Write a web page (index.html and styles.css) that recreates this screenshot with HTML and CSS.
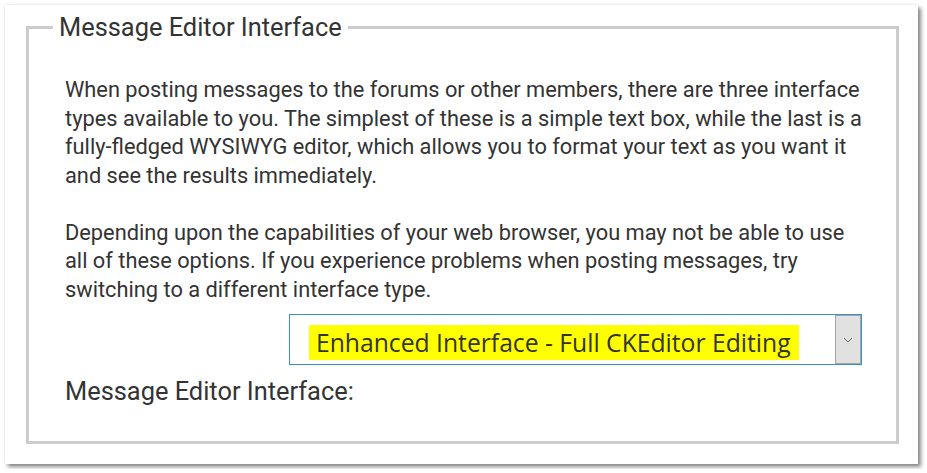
FILE: index.html
```html
<!DOCTYPE html>
<html>
<head>
<meta charset="utf-8">
<link rel="stylesheet" href="styles.css">
</head>
<body>
<div class="card">
  <fieldset class="group">
    <legend class="group-title">Message Editor Interface</legend>
    <div class="content">
      <p class="para">When posting messages to the forums or other members, there are three interface types available to you. The simplest of these is a simple text box, while the last is a fully-fledged WYSIWYG editor, which allows you to format your text as you want it and see the results immediately.</p>
      <p class="para">Depending upon the capabilities of your web browser, you may not be able to use all of these options. If you experience problems when posting messages, try switching to a different interface type.</p>
      <div class="select-row">
        <div class="select">
          <span class="select-value">Enhanced Interface - Full CKEditor Editing</span>
          <span class="select-btn">
            <svg width="10" height="6" viewBox="0 0 10 6"><polyline points="1,1 5,5 9,1" fill="none" stroke="#666" stroke-width="1"/></svg>
          </span>
        </div>
      </div>
      <div class="field-label">Message Editor Interface:</div>
    </div>
  </fieldset>
</div>
</body>
</html>
```
FILE: styles.css
```css
html, body {
  margin: 0;
  padding: 0;
  background: #fff;
}
body {
  padding: 5px;
  font-family: Roboto, "Liberation Sans", sans-serif;
  color: #333;
}
.card {
  width: 913px;
  height: 459px;
  box-sizing: border-box;
  background: #fff;
  box-shadow: 3px 3px 4px rgba(0,0,0,0.45), 0 0 3px rgba(0,0,0,0.12);
  padding: 8px 19px 20px 21px;
}
.group {
  margin: 0;
  border: 3px solid #ccc;
  padding: 0 24px;
  height: 431px;
  box-sizing: border-box;
}
.group-title {
  padding: 0 6px;
  font-size: 25.4px;
  line-height: 29px;
  color: #333;
}
.content {
  padding: 34px 0 0 12px;
}
.para {
  margin: 0;
  font-size: 21.8px;
  line-height: 28.5px;
}
.para + .para {
  margin-top: 28.5px;
}
.select-row {
  display: flex;
  justify-content: flex-end;
  margin: 10px 10px 0 0;
}
.select {
  width: 573px;
  height: 51px;
  box-sizing: border-box;
  border: 1px solid #3d8fc6;
  display: flex;
  align-items: stretch;
  background: #fff;
}
.select-value {
  align-self: flex-start;
  margin: 10px 0 0 19px;
  padding: 0 8px 0 7px;
  background: #ffff00;
  font-family: "Open Sans", "DejaVu Sans", sans-serif;
  font-size: 24.7px;
  line-height: 35px;
  color: #333;
  white-space: nowrap;
}
.select-btn {
  margin-left: auto;
  width: 26px;
  box-sizing: border-box;
  background: #e1e1e1;
  border: 1px solid #a5a5a5;
  display: flex;
  align-items: center;
  justify-content: center;
}
.select-btn svg {
  display: block;
}
.field-label {
  margin-top: 12px;
  font-size: 25.4px;
  line-height: 29px;
}
```
